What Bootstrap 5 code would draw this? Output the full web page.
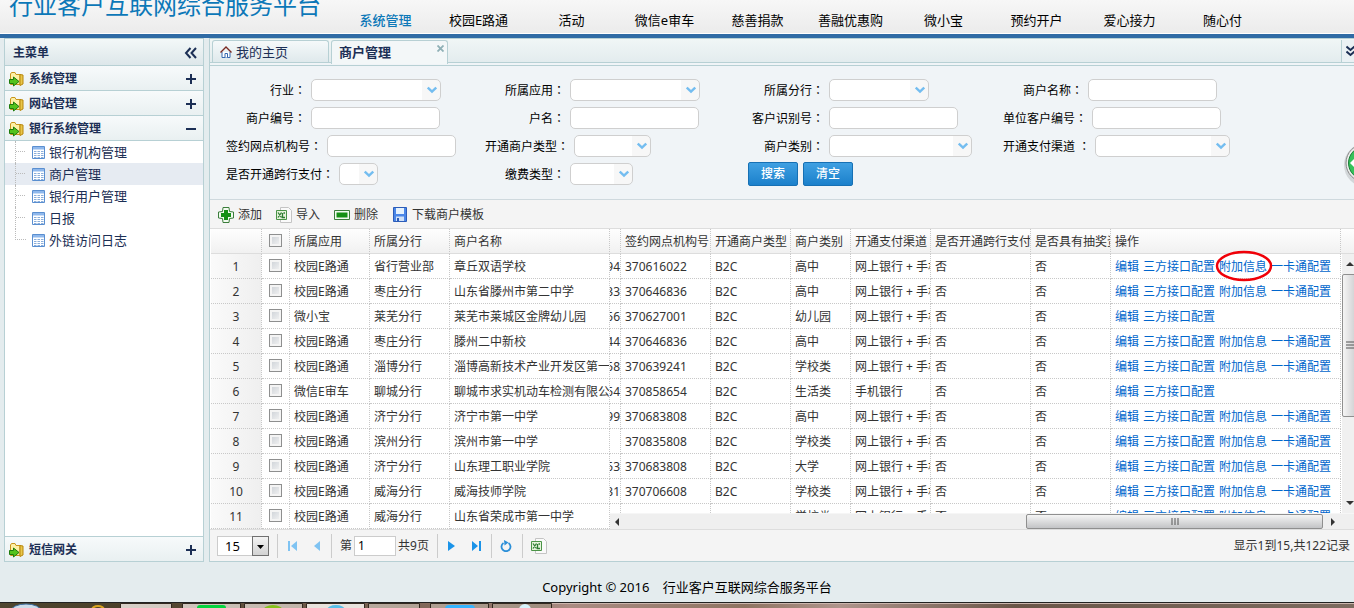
<!DOCTYPE html>
<html lang="zh-CN">
<head>
<meta charset="utf-8">
<meta name="viewport" content="width=device-width, initial-scale=1">
<title>行业客户互联网综合服务平台</title>
<link rel="stylesheet" href="https://cdn.jsdelivr.net/npm/bootstrap@5.3.0/dist/css/bootstrap.min.css">
<style>
  :root { --line: #b7d0d4; --ink: #1c2f55; --dot: #c8c8c8; }
  body { font: 12px/18px "Noto Sans", "Noto Sans CJK SC", sans-serif; color: #000; background: #e4ecee; }
  a { color: #0066cc; text-decoration: none; }
  button { font: inherit; }
  svg { display: block; flex: none; }

  .topbar { height: 38px; background: linear-gradient(#f7f7f7, #ebebeb); border-bottom: 4px solid #2f6ba5; box-shadow: inset 0 -1px #fff; }
  .site-title { width: 339px; padding-left: 9px; margin: -7px 0 0; font-size: 24px; line-height: 24px; color: #0c78b8; font-weight: 400; }
  .topnav a { width: 93px; text-align: center; font-size: 13px; line-height: 18px; color: #000; padding-top: 11px; }
  .topnav a.active { color: #0c78b8; font-weight: 500; }

  .side { width: 200px; background: #fff; border: 1px solid var(--line); color: var(--ink); }
  .side-title { height: 27px; padding: 1px 5px 0 8px; font-weight: 700; background: linear-gradient(#f3f8f8, #dde7ea); border-bottom: 1px solid var(--line); }
  .acc { height: 25px; padding: 1px 7px 0 4px; font-weight: 700; color: var(--ink); background: linear-gradient(#f7fafb, #e9f0f1); border: 0; border-bottom: 1px solid var(--line); }
  .acc.last { border-top: 1px solid var(--line); border-bottom: 0; }
  .tree a { height: 22px; padding-left: 10px; color: var(--ink); font-size: 13px; }
  .tree a.active { background: #e6ebf2; }
  .twig { width: 11px; height: 22px; margin-right: 6px; border-left: 1px dotted #bbb; background: linear-gradient(90deg, #bbb 50%, transparent 50%) 0 10px / 2px 1px repeat-x; }
  .tree a:last-child .twig { height: 11px; align-self: flex-start; border-bottom: 1px dotted #bbb; background: none; }

  .work { margin-left: 5px; border: solid var(--line); border-width: 1px 0 1px 1px; background: #f0f4f7; }
  .tabs { height: 24px; padding: 1px 0 0 2px; background: linear-gradient(#f0f6f6, #e3ecee); border-bottom: 1px solid var(--line); }
  .tab { width: 117px; height: 22px; padding: 0 3px 0 7px; font-size: 13px; border: 1px solid var(--line); border-bottom: 0; border-radius: 3px 3px 0 0; color: var(--ink); background: linear-gradient(#f5f9fa, #dfe9ec); margin-right: 2px; }
  .tab.active { height: 24px; font-weight: 700; line-height: 22px; background: #f3f7f8; }
  .tab-more { width: 13px; border: 0; border-left: 1px solid var(--line); padding: 0 0 0 4px; background: #eaf1f4; height: 22px; }
  .tab-gap { height: 3px; border-bottom: 1px solid var(--line); }

  .search { display: grid; grid-template-columns: repeat(4, 259px); padding: 13px 0 14px 16px; row-gap: 6px; height: 134px; border-bottom: 1px solid #cfd9de; }
  .field { height: 22px; white-space: nowrap; }
  .field label { min-width: 80px; text-align: right; margin-right: 5px; }
  .colon { font-family: "Noto Sans CJK TC", sans-serif; font-feature-settings: "locl" 0; }
  .field input, .field select { height: 22px; border: 1px solid #cfcfcf; border-radius: 5px; background: #fff; padding: 0 4px; width: 129px; appearance: none; }
  .pick { position: relative; }
  .pick select { background: linear-gradient(#f7f7f7, #f7f7f7) right / 18px 100% no-repeat #fff; }
  .pick svg { position: absolute; right: 4px; top: 7px; pointer-events: none; }
  .w-l select { width: 130px; } .w-m select { width: 100px; } .w-s select { width: 77px; }
  .w-xl select { width: 143px; } .w-c select { width: 135px; } .w-xs select { width: 39px; } .w-f select { width: 63px; }
  .act { width: 50px; height: 24px; padding: 0; font-size: 12px; line-height: 18px; font-weight: 500; color: #fff; border: 1px solid #1670b4; border-radius: 2px; background: linear-gradient(#3fa0e2, #1b80cb); margin-right: 5px; }

  .tools { height: 29px; padding: 1px 0 0 8px; background: #f4f4f4; border-bottom: 1px solid #ddd; }
  .tools button { border: 0; background: none; padding: 0; color: #333; margin-right: 14px; gap: 4px; }

  .grid { background: #fff; color: #333; padding-left: 1px; }
  .grid table { table-layout: fixed; border-collapse: separate; border-spacing: 0; }
  .grid th, .grid td { height: 25px; padding: 2px 0 0 4px; line-height: 18px; font-weight: 400; white-space: nowrap; overflow: hidden; border-right: 1px dotted var(--dot); border-bottom: 1px dotted var(--dot); }
  .grid th { background: linear-gradient(#fefefe, #f1f1f1); border-bottom: 1px solid #ddd; }
  .grid .num { text-align: center; background: linear-gradient(90deg, #fafafa, #efefef); padding: 2px 0 0; }
  .grid .tick { text-align: center; padding: 0 0 2px; }
  .frozen { width: 399px; }
  .grid input[type=checkbox] { appearance: none; width: 13px; height: 13px; margin: 0; display: inline-block; vertical-align: middle; border: 1px solid #8e8f8f; background: linear-gradient(135deg, #c9ced4, #f6f6f6); box-shadow: inset 0 0 0 2px #f4f4f4; }
  .moving { position: relative; }
  .moving table { width: 731px; }
  .moving .cut { padding: 2px 0 0; }
  .cut div { display: flex; justify-content: flex-end; overflow: hidden; }
  .moving .head { background: linear-gradient(#fefefe, #f1f1f1); border-bottom: 1px solid #ddd; height: 25px; }
  .moving a { margin-right: 4px; }
  .vbar { width: 12px; background: #f0f0f0; overflow: hidden; }
  .vthumb { width: 17px; height: 143px; border: 1px solid #8f8f8f; border-radius: 2px; background: linear-gradient(90deg, #f5f5f5, #c9c9cb); padding: 66px 0 0 3px; }
  .hbar { height: 16px; background: #efefef; border-top: 1px solid #f6f6f6; padding: 0 18px 0 4px; }
  .hthumb { width: 297px; height: 15px; border: 1px solid #8f8f8f; border-radius: 2px; background: linear-gradient(#f5f5f5, #c3c4c6); }
  .ring { position: absolute; left: 605px; top: 21px; }

  .pager { height: 32px; padding-left: 7px; background: #f4f4f4; color: #333; border-top: 1px solid #ddd; }
  .pager button { border: 0; padding: 0; background: none; }
  .pager button + button { margin-left: 17px; }
  .size-pick select { width: 52px; height: 20px; border: 1px solid #ccc; background: #fff; appearance: none; padding: 0 7px; font-size: 13px; line-height: 18px; color: #000; }
  .size-pick span { position: absolute; right: 0; top: 0; width: 17px; height: 20px; border: 1px solid #707070; background: linear-gradient(#f3f3f3, #d2d2d2); padding: 8px 0 0 4px; pointer-events: none; }
  .vr-line { width: 1px; height: 24px; background: #ccc; margin: 0 10px; }
  .page-no { width: 42px; height: 20px; border: 1px solid #ccc; padding: 0 3px; margin: 0 2px; }
  .foot { height: 40px; padding: 10px 0 0 20px; font-size: 13px; line-height: 18px; }
  .bubble { position: absolute; right: 0; top: 100px; }
</style>
</head>
<body class="d-flex flex-column vh-100 overflow-hidden">

<svg width="0" height="0" class="position-absolute" aria-hidden="true">
  <symbol id="folder" viewBox="0 0 16 16">
    <path d="M1.500 13V3l1-1.500h3.500l1 2h4v10H1.500z" fill="#fdf0a5" stroke="#c8951c"/>
    <path d="M11 3.500l3 .5v9l-3 1.500z" fill="#e8c64a" stroke="#b8860b"/>
    <path d="M.5 8.500h4v-2.500l5.500 4.500-5.500 4.500v-2.500h-4z" fill="#54c31c" stroke="#1d7b0c"/>
  </symbol>
  <symbol id="sheet" viewBox="0 0 13 13">
    <path d="M.5.5h12v12H.5z" fill="#fff" stroke="#5a8fd0"/><path d="M1 1h11v2.500H1z" fill="#8fb8ec"/>
    <path d="M2 5.500h2.500m1 0h2.500m1 0h2.500M2 7.500h2.500m1 0h2.500m1 0h2.500M2 9.500h2.500m1 0h2.500m1 0h2.500M2 11.500h2.500m1 0h2.500m1 0h2.500" stroke="#8aaedb"/>
  </symbol>
  <symbol id="plus" viewBox="0 0 10 10"><path d="M0 5h10M5 0v10" stroke="#1c2f55" stroke-width="2"/></symbol>
  <symbol id="minus" viewBox="0 0 10 10"><path d="M0 5h10" stroke="#1c2f55" stroke-width="2"/></symbol>
  <symbol id="chev" viewBox="0 0 10 8"><path d="M.8 1.500L5 5.500l4.200-4" fill="none" stroke="#74bdf0" stroke-width="2.400"/></symbol>
  <symbol id="xls" viewBox="0 0 16 16">
    <path d="M4.500.5h8l3 3v12h-11z" fill="#fafafa" stroke="#c4c4c4"/><path d="M.5 3.500h10v9H.5z" fill="#e6f3dc" stroke="#4b9447"/>
    <path d="M2 5.500l3.500 5M5.500 5.500L2 10.500M6.500 6v4.500h2.500M9 6H7.500" fill="none" stroke="#2e7d32" stroke-width="1.300"/>
  </symbol>
</svg>

<header class="topbar d-flex overflow-hidden flex-shrink-0">
  <h1 class="site-title text-nowrap">行业客户互联网综合服务平台</h1>
  <nav class="topnav d-flex" aria-label="业务">
    <a class="active" href="#">系统管理</a><a href="#">校园E路通</a><a href="#">活动</a><a href="#">微信e审车</a><a href="#">慈善捐款</a><a href="#">善融优惠购</a><a href="#">微小宝</a><a href="#">预约开户</a><a href="#">爱心接力</a><a href="#">随心付</a>
  </nav>
</header>

<div class="d-flex flex-grow-1 overflow-hidden ps-1">
  <aside class="side d-flex flex-column flex-shrink-0">
    <div class="side-title d-flex align-items-center justify-content-between">主菜单
      <svg width="14" height="12" viewBox="0 0 14 12"><path d="M6.500 1L2 6l4.500 5M12 1L7.500 6l4.500 5" fill="none" stroke="#1c2f55" stroke-width="2"/></svg>
    </div>
    <button class="acc d-flex align-items-center"><svg class="me-1" width="16" height="16"><use href="#folder"/></svg><span class="me-auto">系统管理</span><svg width="10" height="10"><use href="#plus"/></svg></button>
    <button class="acc d-flex align-items-center"><svg class="me-1" width="16" height="16"><use href="#folder"/></svg><span class="me-auto">网站管理</span><svg width="10" height="10"><use href="#plus"/></svg></button>
    <button class="acc d-flex align-items-center"><svg class="me-1" width="16" height="16"><use href="#folder"/></svg><span class="me-auto">银行系统管理</span><svg width="10" height="10"><use href="#minus"/></svg></button>
    <nav class="tree flex-grow-1" aria-label="银行系统管理">
      <a class="d-flex align-items-center" href="#"><span class="twig"></span><svg class="me-1" width="13" height="13"><use href="#sheet"/></svg>银行机构管理</a>
      <a class="d-flex align-items-center active" href="#"><span class="twig"></span><svg class="me-1" width="13" height="13"><use href="#sheet"/></svg>商户管理</a>
      <a class="d-flex align-items-center" href="#"><span class="twig"></span><svg class="me-1" width="13" height="13"><use href="#sheet"/></svg>银行用户管理</a>
      <a class="d-flex align-items-center" href="#"><span class="twig"></span><svg class="me-1" width="13" height="13"><use href="#sheet"/></svg>日报</a>
      <a class="d-flex align-items-center" href="#"><span class="twig"></span><svg class="me-1" width="13" height="13"><use href="#sheet"/></svg>外链访问日志</a>
    </nav>
    <button class="acc last d-flex align-items-center"><svg class="me-1" width="16" height="16"><use href="#folder"/></svg><span class="me-auto">短信网关</span><svg width="10" height="10"><use href="#plus"/></svg></button>
  </aside>

  <main class="work d-flex flex-column flex-grow-1 overflow-hidden position-relative">
    <div class="tabs d-flex flex-shrink-0">
      <a class="tab d-flex align-items-center" href="#">
        <svg class="me-1" width="12" height="12" viewBox="0 0 12 12"><path d="M2 6v5.500h8V6" fill="#fff" stroke="#3668b0"/><path d="M5 11.500v-4h2.500v4" fill="#fff" stroke="#3668b0"/><path d="M.5 6.500L6 1l5.500 5.500" fill="none" stroke="#7b2a22" stroke-width="1.400"/></svg>我的主页</a>
      <a class="tab active d-flex" href="#"><span class="me-auto">商户管理</span>
        <svg class="mt-1" width="7" height="7" viewBox="0 0 7 7"><path d="M.5.500l6 6M6.500.500l-6 6" stroke="#8fb0b6" stroke-width="1.800"/></svg></a>
      <button class="tab-more ms-auto overflow-hidden" aria-label="更多"><svg width="10" height="12" viewBox="0 0 10 12"><path d="M.5 1.500L4.500 5l4-3.500M.5 6.500l4 3.500 4-3.500" fill="none" stroke="#1c2f55" stroke-width="2"/></svg></button>
    </div>
    <div class="tab-gap flex-shrink-0"></div>

    <form class="search flex-shrink-0">
      <div class="field d-flex align-items-center"><label for="f1">行业<span class="colon">：</span></label><span class="pick w-l"><select id="f1"><option></option></select><svg width="10" height="8"><use href="#chev"/></svg></span></div>
      <div class="field d-flex align-items-center"><label for="f2">所属应用<span class="colon">：</span></label><span class="pick w-l"><select id="f2"><option></option></select><svg width="10" height="8"><use href="#chev"/></svg></span></div>
      <div class="field d-flex align-items-center"><label for="f3">所属分行<span class="colon">：</span></label><span class="pick w-m"><select id="f3"><option></option></select><svg width="10" height="8"><use href="#chev"/></svg></span></div>
      <div class="field d-flex align-items-center"><label for="f4">商户名称<span class="colon">：</span></label><input id="f4" type="text"></div>

      <div class="field d-flex align-items-center"><label for="f5">商户编号<span class="colon">：</span></label><input id="f5" type="text"></div>
      <div class="field d-flex align-items-center"><label for="f6">户名<span class="colon">：</span></label><input id="f6" type="text"></div>
      <div class="field d-flex align-items-center"><label for="f7">客户识别号<span class="colon">：</span></label><input id="f7" type="text"></div>
      <div class="field d-flex align-items-center"><label for="f8">单位客户编号<span class="colon">：</span></label><input id="f8" type="text"></div>

      <div class="field d-flex align-items-center"><label for="f9">签约网点机构号<span class="colon">：</span></label><input id="f9" type="text"></div>
      <div class="field d-flex align-items-center"><label for="f10">开通商户类型<span class="colon">：</span></label><span class="pick w-s"><select id="f10"><option></option></select><svg width="10" height="8"><use href="#chev"/></svg></span></div>
      <div class="field d-flex align-items-center"><label for="f11">商户类别<span class="colon">：</span></label><span class="pick w-xl"><select id="f11"><option></option></select><svg width="10" height="8"><use href="#chev"/></svg></span></div>
      <div class="field d-flex align-items-center"><label for="f12">开通支付渠道 <span class="colon">：</span></label><span class="pick w-c"><select id="f12"><option></option></select><svg width="10" height="8"><use href="#chev"/></svg></span></div>

      <div class="field d-flex align-items-center"><label for="f13">是否开通跨行支付<span class="colon">：</span></label><span class="pick w-xs"><select id="f13"><option></option></select><svg width="10" height="8"><use href="#chev"/></svg></span></div>
      <div class="field d-flex align-items-center"><label for="f14">缴费类型<span class="colon">：</span></label><span class="pick w-f"><select id="f14"><option></option></select><svg width="10" height="8"><use href="#chev"/></svg></span></div>
      <div class="field d-flex align-items-center ps-1"><button type="button" class="act">搜索</button><button type="button" class="act">清空</button></div>
    </form>

    <div class="tools d-flex align-items-center flex-shrink-0">
      <button class="d-flex align-items-center"><svg width="16" height="16" viewBox="0 0 16 16"><path d="M5 .5h6l.5 4 4 .5v6l-4 .5-.5 4H5l-.5-4-4-.5V5l4-.5z" fill="#f2fbf0" stroke="#3b7d3b"/><path d="M6 3h4v3h3v4h-3v3H6v-3H3V6h3z" fill="#159015"/></svg>添加</button>
      <button class="d-flex align-items-center"><svg width="16" height="16"><use href="#xls"/></svg>导入</button>
      <button class="d-flex align-items-center"><svg width="16" height="16" viewBox="0 0 16 16"><path d="M.5 3.500h15v9H.500z" fill="#f2fbf0" stroke="#3b7d3b"/><path d="M2.500 5.500h11v5h-11z" fill="#159015"/></svg>删除</button>
      <button class="d-flex align-items-center"><svg width="16" height="16" viewBox="0 0 16 16"><path d="M1.500.500h13v14h-13z" fill="#4a86e8" stroke="#2c5cb8"/><path d="M4 1h8v6H4z" fill="#e6f2fd"/><path d="M4 9.500h8V14H4z" fill="#cfe0f7"/><path d="M5 11h2v3H5z" fill="#2c5cb8"/></svg>下载商户模板</button>
    </div>

    <div class="grid d-flex flex-grow-1 overflow-hidden">
      <div class="frozen flex-shrink-0 overflow-hidden">
        <table class="w-100">
          <colgroup><col width="51"><col width="28"><col width="80"><col width="80"><col width="160"></colgroup>
          <thead><tr><th></th><th class="tick"><input type="checkbox" aria-label="全选"></th><th>所属应用</th><th>所属分行</th><th>商户名称</th></tr></thead>
          <tbody id="left"></tbody>
        </table>
      </div>
      <div class="moving d-flex flex-column flex-grow-1 overflow-hidden">
        <div class="head flex-shrink-0">
          <table><colgroup><col width="11"><col width="90"><col width="80"><col width="60"><col width="80"><col width="100"><col width="80"><col width="230"></colgroup>
            <thead><tr><th></th><th>签约网点机构号</th><th>开通商户类型</th><th>商户类别</th><th>开通支付渠道</th><th>是否开通跨行支付</th><th>是否具有抽奖资格</th><th>操作</th></tr></thead></table>
        </div>
        <div class="d-flex flex-grow-1 overflow-hidden">
          <div class="flex-grow-1 overflow-hidden">
            <table><colgroup><col width="11"><col width="90"><col width="80"><col width="60"><col width="80"><col width="100"><col width="80"><col width="230"></colgroup>
              <tbody id="right"></tbody></table>
          </div>
          <div class="vbar d-flex flex-column flex-shrink-0">
            <svg class="my-2" width="12" height="4" viewBox="0 0 12 4"><path d="M8 0l4 4H4z" fill="#333"/></svg>
            <div class="vthumb flex-shrink-0"><svg width="8" height="8" viewBox="0 0 8 8"><path d="M0 1h8M0 4h8M0 7h8" stroke="#555"/></svg></div>
            <svg class="mt-auto mb-2" width="12" height="4" viewBox="0 0 12 4"><path d="M4 0h8L8 4z" fill="#333"/></svg>
          </div>
        </div>
        <div class="hbar d-flex align-items-center flex-shrink-0">
          <svg width="5" height="8" viewBox="0 0 5 8"><path d="M5 0v8L1 4z" fill="#333"/></svg>
          <div class="hthumb ms-auto me-2 d-flex align-items-center justify-content-center"><svg width="8" height="7" viewBox="0 0 8 7"><path d="M1 0v7M4 0v7M7 0v7" stroke="#555"/></svg></div>
          <svg width="5" height="8" viewBox="0 0 5 8"><path d="M0 0v8l4-4z" fill="#333"/></svg>
        </div>
        <svg class="ring" width="58" height="32" viewBox="0 0 58 32"><ellipse cx="29" cy="16" rx="27" ry="14" fill="none" stroke="#f00008" stroke-width="2.500"/></svg>
      </div>
    </div>

    <div class="pager d-flex align-items-center flex-shrink-0">
      <span class="size-pick position-relative"><select aria-label="每页条数"><option>15</option></select><span><svg width="7" height="4" viewBox="0 0 7 4"><path d="M0 0h7L3.500 4z"/></svg></span></span>
      <i class="vr-line ms-2"></i>
      <button aria-label="首页"><svg width="9" height="10" viewBox="0 0 9 10"><path d="M0 0h2v10H0zM9 0v10L3 5z" fill="#7fc3f2"/></svg></button>
      <button aria-label="上一页"><svg width="7" height="10" viewBox="0 0 7 10"><path d="M6 0v10L0 5z" fill="#7fc3f2"/></svg></button>
      <i class="vr-line me-2"></i>
      <label for="pg">第</label><input id="pg" class="page-no" type="text" value="1"><span>共9页</span>
      <i class="vr-line ms-2"></i>
      <button aria-label="下一页"><svg width="7" height="10" viewBox="0 0 7 10"><path d="M0 0v10l7-5z" fill="#1a93e8"/></svg></button>
      <button aria-label="末页"><svg width="9" height="10" viewBox="0 0 9 10"><path d="M7 0h2v10H7zM0 0v10l6-5z" fill="#1a93e8"/></svg></button>
      <i class="vr-line me-2"></i>
      <button aria-label="刷新"><svg width="12" height="12" viewBox="0 0 12 12"><path d="M8.500 3a4.500 4.500 0 1 1-5 0" fill="none" stroke="#2b8fd8" stroke-width="1.800"/><path d="M4 0l4.500 2.500L4.500 5.500z" fill="#2b8fd8"/></svg></button>
      <i class="vr-line me-2"></i>
      <button aria-label="导出"><svg width="16" height="16"><use href="#xls"/></svg></button>
      <span class="ms-auto me-1 text-nowrap">显示1到15,共122记录</span>
    </div>
    <svg class="bubble" width="14" height="50" viewBox="0 0 14 50"><circle cx="26" cy="26" r="22" fill="#000" opacity=".12"/><circle cx="25" cy="24" r="19" fill="#eee" stroke="#888"/><circle cx="25" cy="24" r="16.500" fill="#35c25a" stroke="#1c7d3a"/><path d="M10 24l4-4v8z" fill="#fff"/></svg>
  </main>
</div>

<footer class="foot d-flex align-items-center justify-content-center flex-shrink-0"><span>Copyright © 2016 &nbsp;&nbsp; 行业客户互联网综合服务平台</span></footer>

<svg class="flex-shrink-0 w-100" height="6" viewBox="0 0 1354 6" preserveAspectRatio="xMinYMin slice" aria-hidden="true">
  <defs>
    <linearGradient id="desk"><stop offset="0" stop-color="#4f4630"/><stop offset=".09" stop-color="#4b4029"/><stop offset=".35" stop-color="#8a6f62"/><stop offset=".42" stop-color="#ab8c83"/><stop offset=".55" stop-color="#8f7462"/><stop offset=".62" stop-color="#b0958c"/><stop offset=".75" stop-color="#6b5648"/><stop offset="1" stop-color="#7e6c60"/></linearGradient>
    <linearGradient id="task"><stop offset="0" stop-color="#d8d0c8"/><stop offset="1" stop-color="#a08d7e"/></linearGradient>
  </defs>
  <path d="M0 0h1354v6H0z" fill="url(#desk)"/><path d="M0 0h1354v1H0z" fill="#222"/><path d="M552 1h802v1H552z" fill="#cbb5ac"/>
  <g fill="url(#task)" stroke="#33291f"><path d="M120.500 1.500h51v6h-51zM182.500 1.500h58v6h-58zM244.500 1.500h58v6h-58zM368.500 1.500h51v6h-51zM430.500 1.500h58v6h-58zM492.500 1.500h59v6h-59z"/><path d="M306.500 1.500h58v6h-58z" fill="#e8e2dc"/></g>
  <ellipse cx="26" cy="9" rx="15" ry="7" fill="#cddcea" stroke="#3b6ea0"/><ellipse cx="98" cy="8" rx="6" ry="4" fill="none" stroke="#d9a520" stroke-width="2"/>
  <rect x="197" y="3" width="29" height="8" rx="3" fill="#05d43e"/><ellipse cx="273" cy="9" rx="10" ry="6" fill="#86c21a"/><ellipse cx="336" cy="8" rx="9" ry="5" fill="#58bfe8"/><rect x="445" y="3" width="30" height="8" rx="4" fill="#35b4ff"/><circle cx="525" cy="8" r="6" fill="#d8f4fc"/>
</svg>

<script>
  const rows = [
    ['校园E路通', '省行营业部', '章丘双语学校', '94', '370616022', '高中', '网上银行 + 手机银行', 1],
    ['校园E路通', '枣庄分行', '山东省滕州市第二中学', '33', '370646836', '高中', '网上银行 + 手机银行', 1],
    ['微小宝', '莱芜分行', '莱芜市莱城区金牌幼儿园', '56', '370627001', '幼儿园', '网上银行 + 手机银行', 0],
    ['校园E路通', '枣庄分行', '滕州二中新校', '44', '370646836', '高中', '网上银行 + 手机银行', 1],
    ['校园E路通', '淄博分行', '淄博高新技术产业开发区第一中学', '58', '370639241', '学校类', '网上银行 + 手机银行', 1],
    ['微信E审车', '聊城分行', '聊城市求实机动车检测有限公司', '54', '370858654', '生活类', '手机银行', 0],
    ['校园E路通', '济宁分行', '济宁市第一中学', '99', '370683808', '高中', '网上银行 + 手机银行', 1],
    ['校园E路通', '滨州分行', '滨州市第一中学', '', '370835808', '学校类', '网上银行 + 手机银行', 1],
    ['校园E路通', '济宁分行', '山东理工职业学院', '53', '370683808', '大学', '网上银行 + 手机银行', 1],
    ['校园E路通', '威海分行', '威海技师学院', '31', '370706608', '学校类', '网上银行 + 手机银行', 1],
    ['校园E路通', '威海分行', '山东省荣成市第一中学', '', '', '学校类', '网上银行 + 手机银行', 1]
  ];
  const link = t => `<a href="#">${t}</a>`;
  document.getElementById('left').innerHTML = rows.map((r, i) =>
    `<tr><td class="num">${i + 1}</td><td class="tick"><input type="checkbox" aria-label="选择第${i + 1}行"></td><td>${r[0]}</td><td>${r[1]}</td><td>${r[2]}</td></tr>`).join('');
  document.getElementById('right').innerHTML = rows.map(r =>
    `<tr><td class="cut"><div>${r[3]}</div></td><td>${r[4]}</td><td>${r[4] ? 'B2C' : ''}</td><td>${r[5]}</td><td>${r[6]}</td><td>否</td><td>否</td><td>${['编辑', '三方接口配置'].concat(r[7] ? ['附加信息', '一卡通配置'] : []).map(link).join('')}</td></tr>`).join('');
</script>
<script src="https://cdn.jsdelivr.net/npm/bootstrap@5.3.0/dist/js/bootstrap.bundle.min.js"></script>
</body>
</html>
